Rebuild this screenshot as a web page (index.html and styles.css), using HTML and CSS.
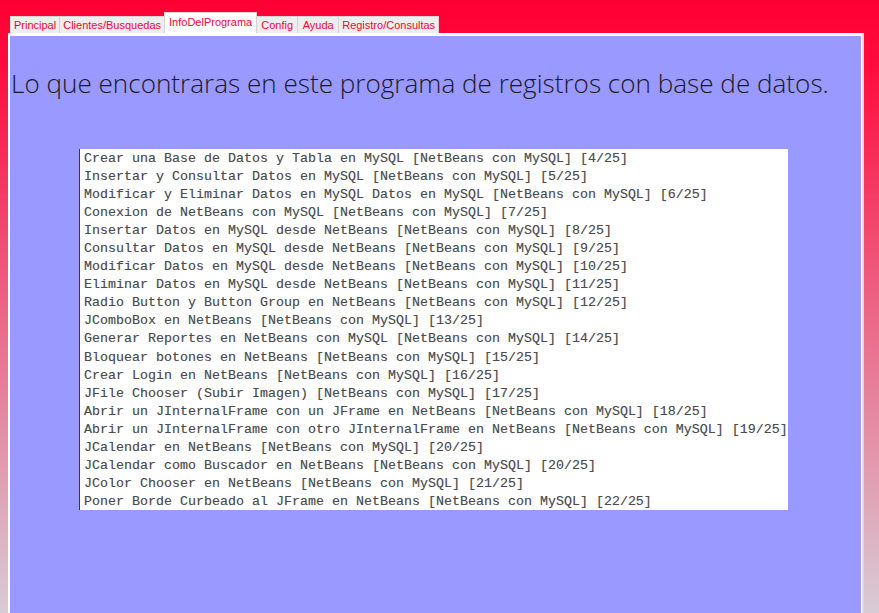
FILE: index.html
```html
<!DOCTYPE html>
<html lang="es">
<head>
<meta charset="utf-8">
<title>InfoDelPrograma</title>
<link rel="stylesheet" href="styles.css">
</head>
<body>
<div class="window">
  <div class="tabs">
    <div class="tab">Principal</div>
    <div class="tab">Clientes/Busquedas</div>
    <div class="tab active">InfoDelPrograma</div>
    <div class="tab">Config</div>
    <div class="tab">Ayuda</div>
    <div class="tab">Registro/Consultas</div>
  </div>
  <div class="panel">
    <div class="inner">
      <h1 class="title">Lo que encontraras en este programa de registros con base de datos.</h1>
      <div class="shot">
        <div class="line">Crear una Base de Datos y Tabla en MySQL [NetBeans con MySQL] [4/25]</div>
        <div class="line">Insertar y Consultar Datos en MySQL [NetBeans con MySQL] [5/25]</div>
        <div class="line">Modificar y Eliminar Datos en MySQL Datos en MySQL [NetBeans con MySQL] [6/25]</div>
        <div class="line">Conexion de NetBeans con MySQL [NetBeans con MySQL] [7/25]</div>
        <div class="line">Insertar Datos en MySQL desde NetBeans [NetBeans con MySQL] [8/25]</div>
        <div class="line">Consultar Datos en MySQL desde NetBeans [NetBeans con MySQL] [9/25]</div>
        <div class="line">Modificar Datos en MySQL desde NetBeans [NetBeans con MySQL] [10/25]</div>
        <div class="line">Eliminar Datos en MySQL desde NetBeans [NetBeans con MySQL] [11/25]</div>
        <div class="line">Radio Button y Button Group en NetBeans [NetBeans con MySQL] [12/25]</div>
        <div class="line">JComboBox en NetBeans [NetBeans con MySQL] [13/25]</div>
        <div class="line">Generar Reportes en NetBeans con MySQL [NetBeans con MySQL] [14/25]</div>
        <div class="line">Bloquear botones en NetBeans [NetBeans con MySQL] [15/25]</div>
        <div class="line">Crear Login en NetBeans [NetBeans con MySQL] [16/25]</div>
        <div class="line">JFile Chooser (Subir Imagen) [NetBeans con MySQL] [17/25]</div>
        <div class="line">Abrir un JInternalFrame con un JFrame en NetBeans [NetBeans con MySQL] [18/25]</div>
        <div class="line">Abrir un JInternalFrame con otro JInternalFrame en NetBeans [NetBeans con MySQL] [19/25]</div>
        <div class="line">JCalendar en NetBeans [NetBeans con MySQL] [20/25]</div>
        <div class="line">JCalendar como Buscador en NetBeans [NetBeans con MySQL] [20/25]</div>
        <div class="line">JColor Chooser en NetBeans [NetBeans con MySQL] [21/25]</div>
        <div class="line">Poner Borde Curbeado al JFrame en NetBeans [NetBeans con MySQL] [22/25]</div>
      </div>
    </div>
  </div>
</div>
</body>
</html>
```

FILE: styles.css
```css
html, body {
  margin: 0;
  padding: 0;
  height: 100%;
  overflow: hidden;
}
body {
  background: linear-gradient(to bottom, #ff0033 0px, #ff0a3c 60px, #ec6283 300px, #d8ccd6 613px);
  font-family: "Liberation Sans", Arial, sans-serif;
}
.window {
  padding: 13px 15px 0 8px;
  display: flex;
  flex-direction: column;
  height: 600px;
}
.tabs {
  display: flex;
  align-items: flex-end;
  padding-left: 2px;
  height: 20px;
  position: relative;
  z-index: 1;
}
.tab {
  height: 16px;
  line-height: 16px;
  padding: 0 3px;
  min-width: 34px;
  text-align: center;
  font-size: 11px;
  color: #ff0033;
  background: #eeeeee;
  border: 1px solid #d4d4d4;
  border-bottom: none;
  margin-right: -1px;
}
.tab.active {
  height: 20px;
  line-height: 18px;
  background: #ffffff;
  padding: 0 4px;
}
.panel {
  flex: 1;
  background: #ffffff;
  border-right: 2px solid #dcdcdc;
  padding: 3px 1px 0 2px;
  display: flex;
}
.inner {
  flex: 1;
  background: #9999ff;
  display: flex;
  flex-direction: column;
}
.title {
  margin: 30px 0 0 1px;
  font-family: "Open Sans", sans-serif;
  font-weight: 300;
  font-size: 26.1px;
  letter-spacing: 0;
  color: #1a1a2a;
  line-height: 34px;
  white-space: nowrap;
}
.shot {
  margin: 49px 0 0 69px;
  width: 709px;
  height: 361px;
  background: #ffffff;
  border-left: 1px solid #3a3a3a;
  padding: 1px 0 0 4px;
  box-sizing: border-box;
  overflow: hidden;
}
.line {
  font-family: "Liberation Mono", "DejaVu Sans Mono", monospace;
  font-size: 13.33px;
  line-height: 18.05px;
  color: #4d4d4d;
  white-space: nowrap;
  text-shadow: 0 0 0.7px rgba(90,90,90,0.4);
}
```
